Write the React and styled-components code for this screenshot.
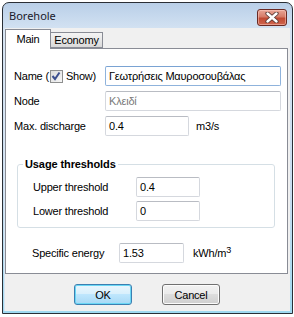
import React from "react";
import styled, { createGlobalStyle } from "styled-components";

const Global = createGlobalStyle`
  html, body { margin: 0; padding: 0; background: #ffffff; }
  body { font-family: "Liberation Sans", Arial, sans-serif; font-size: 11px; color: #000; }
  * { box-sizing: border-box; }
`;

const Window = styled.div`
  margin: 2px 0 0 2px;
  width: 291px;
  height: 312px;
  border: 1px solid #2a2f36;
  border-radius: 7px 7px 0 0;
  background: linear-gradient(to bottom, #b9cfe8 0px, #d3e2f2 26px, #c9ddf0 60%, #9fd9f0 100%);
  padding: 0 2px 2px 1px;
  display: flex;
  flex-direction: column;
  overflow: hidden;
`;

const TitleBar = styled.div`
  height: 25px;
  display: flex;
  align-items: flex-start;
  justify-content: space-between;
  padding: 0 3px 0 5px;
  flex: none;
`;

const Title = styled.span`
  font-family: "Noto Sans", "Open Sans", sans-serif;
  font-size: 11px;
  line-height: 15px;
  margin-top: 5px;
  color: #1a1a2a;
`;

const CloseButton = styled.div`
  margin-top: 6px;
  width: 30px;
  height: 17px;
  border: 1px solid #6a2a24;
  border-radius: 3px;
  background: linear-gradient(to bottom, #e8a596 0%, #d67b68 45%, #c04a33 55%, #d0664f 100%);
  box-shadow: inset 0 0 0 1px rgba(255, 210, 200, 0.5);
  display: flex;
  align-items: center;
  justify-content: center;
`;

const Client = styled.div`
  flex: 1;
  background: #f0f0f0;
  display: flex;
  flex-direction: column;
  border-left: 1px solid #d9e6f3;
`;

const TabStrip = styled.div`
  height: 20px;
  display: flex;
  align-items: flex-end;
  flex: none;
  position: relative;
  z-index: 1;
`;

const Tab = styled.div`
  height: ${(p) => (p.$active ? "20px" : "16px")};
  width: ${(p) => p.$w}px;
  margin-bottom: ${(p) => (p.$active ? "-1px" : "0")};
  margin-left: ${(p) => (p.$active ? "0" : "-1px")};
  border: 1px solid #898c95;
  border-bottom: ${(p) => (p.$active ? "none" : "1px solid #898c95")};
  background: ${(p) =>
    p.$active ? "#ffffff" : "linear-gradient(to bottom, #f4f4f4 0%, #e8e8e8 50%, #d9d9d9 100%)"};
  display: flex;
  align-items: ${(p) => (p.$active ? "flex-start" : "center")};
  justify-content: center;
  padding-top: ${(p) => (p.$active ? "3px" : "0")};
  font-size: 11px;
  letter-spacing: -0.2px;
  position: relative;
  z-index: ${(p) => (p.$active ? 2 : 1)};
`;

const Pane = styled.div`
  height: 226px;
  margin: 0 2px 0 0;
  border: 1px solid #898c95;
  background: #ffffff;
  padding: 17px 0 0 8px;
  display: flex;
  flex-direction: column;
  flex: none;
`;

const Row = styled.div`
  display: flex;
  align-items: center;
  height: 20px;
  margin-top: ${(p) => p.$top ?? 0}px;
  margin-bottom: ${(p) => p.$gap ?? 5}px;
  margin-left: ${(p) => p.$indent ?? 0}px;
`;

const Label = styled.span`
  width: ${(p) => p.$w}px;
  flex: none;
  display: flex;
  align-items: center;
  letter-spacing: -0.2px;
  white-space: nowrap;
`;

const Input = styled.div`
  width: ${(p) => p.$w}px;
  height: 20px;
  flex: none;
  border: 1px solid ${(p) => (p.$focus ? "#8fb3dc" : "#d5d8de")};
  border-top-color: ${(p) => (p.$focus ? "#7aa3d3" : "#b9bcc3")};
  border-radius: 2px;
  background: #fff;
  padding: 0 3px;
  display: flex;
  align-items: center;
  color: ${(p) => (p.$disabled ? "#7a7a7a" : "#000")};
  letter-spacing: -0.2px;
  white-space: nowrap;
  overflow: hidden;
`;

const Unit = styled.span`
  margin-left: ${(p) => p.$ml}px;
  letter-spacing: -0.2px;
  sup {
    font-size: 9px;
    line-height: 0;
    vertical-align: 4px;
  }
`;

const Check = styled.span`
  width: 13px;
  height: 13px;
  margin: 0 3px 0 1px;
  border: 1px solid #8e8f8f;
  background: linear-gradient(135deg, #dcdcdc 0%, #f6f6f6 100%);
  display: inline-flex;
  align-items: center;
  justify-content: center;
  flex: none;
`;

const Group = styled.fieldset`
  margin: 21px 12px 0 3px;
  padding: 6px 8px 6px 5px;
  border: 1px solid #d5dfe5;
  border-radius: 3px;
  min-width: 0;
`;

const Legend = styled.legend`
  padding: 0 2px;
  font-weight: bold;
  font-size: 11px;
  line-height: 14px;
  letter-spacing: -0.1px;
`;

const ButtonRow = styled.div`
  display: flex;
  justify-content: center;
  gap: 30px;
  padding-top: 10px;
  padding-right: 1px;
`;

const Button = styled.div`
  width: 58px;
  height: 21px;
  border: 1px solid ${(p) => (p.$default ? "#3c7fb1" : "#707070")};
  border-radius: 3px;
  background: ${(p) =>
    p.$default
      ? "linear-gradient(to bottom, #eaf6fd 0%, #d9f0fc 45%, #bee6fd 50%, #a7d9f5 100%)"
      : "linear-gradient(to bottom, #f2f2f2 0%, #ebebeb 45%, #dddddd 50%, #cfcfcf 100%)"};
  box-shadow: inset 0 0 0 1px ${(p) => (p.$default ? "#6ad7f5" : "#fcfcfc")};
  display: flex;
  align-items: center;
  justify-content: center;
  letter-spacing: -0.2px;
`;

export default function App() {
  return (
    <>
      <Global />
      <Window>
        <TitleBar>
          <Title>Borehole</Title>
          <CloseButton>
            <svg width="14" height="11" viewBox="0 0 14 11">
              <path
                d="M2.5 1.5 L11.5 9.5 M11.5 1.5 L2.5 9.5"
                stroke="#5a3a36"
                strokeWidth="4.2"
                strokeLinecap="round"
              />
              <path
                d="M2.5 1.5 L11.5 9.5 M11.5 1.5 L2.5 9.5"
                stroke="#ffffff"
                strokeWidth="2.4"
                strokeLinecap="round"
              />
            </svg>
          </CloseButton>
        </TitleBar>
        <Client>
          <TabStrip>
            <Tab $active $w={46}>Main</Tab>
            <Tab $w={53}>Economy</Tab>
          </TabStrip>
          <Pane>
            <Row>
              <Label $w={91}>
                Name (
                <Check>
                  <svg width="10" height="10" viewBox="0 0 10 10">
                    <path d="M1.5 5 L4 8 L8.5 1.5" stroke="#3c4f8f" strokeWidth="2" fill="none" />
                  </svg>
                </Check>
                Show)
              </Label>
              <Input $w={176} $focus>Γεωτρήσεις Μαυροσουβάλας</Input>
            </Row>
            <Row>
              <Label $w={91}>Node</Label>
              <Input $w={176} $disabled>Κλειδί</Input>
            </Row>
            <Row $gap={0}>
              <Label $w={91}>Max. discharge</Label>
              <Input $w={84}>0.4</Input>
              <Unit $ml={7}>m3/s</Unit>
            </Row>
            <Group>
              <Legend>Usage thresholds</Legend>
              <Row $indent={10} $gap={4}>
                <Label $w={103}>Upper threshold</Label>
                <Input $w={64}>0.4</Input>
              </Row>
              <Row $indent={10} $gap={0}>
                <Label $w={103}>Lower threshold</Label>
                <Input $w={64}>0</Input>
              </Row>
            </Group>
            <Row $indent={18} $gap={0} $top={15}>
              <Label $w={87}>Specific energy</Label>
              <Input $w={65}>1.53</Input>
              <Unit $ml={9}>
                kWh/m<sup>3</sup>
              </Unit>
            </Row>
          </Pane>
          <ButtonRow>
            <Button $default>OK</Button>
            <Button>Cancel</Button>
          </ButtonRow>
        </Client>
      </Window>
    </>
  );
}
